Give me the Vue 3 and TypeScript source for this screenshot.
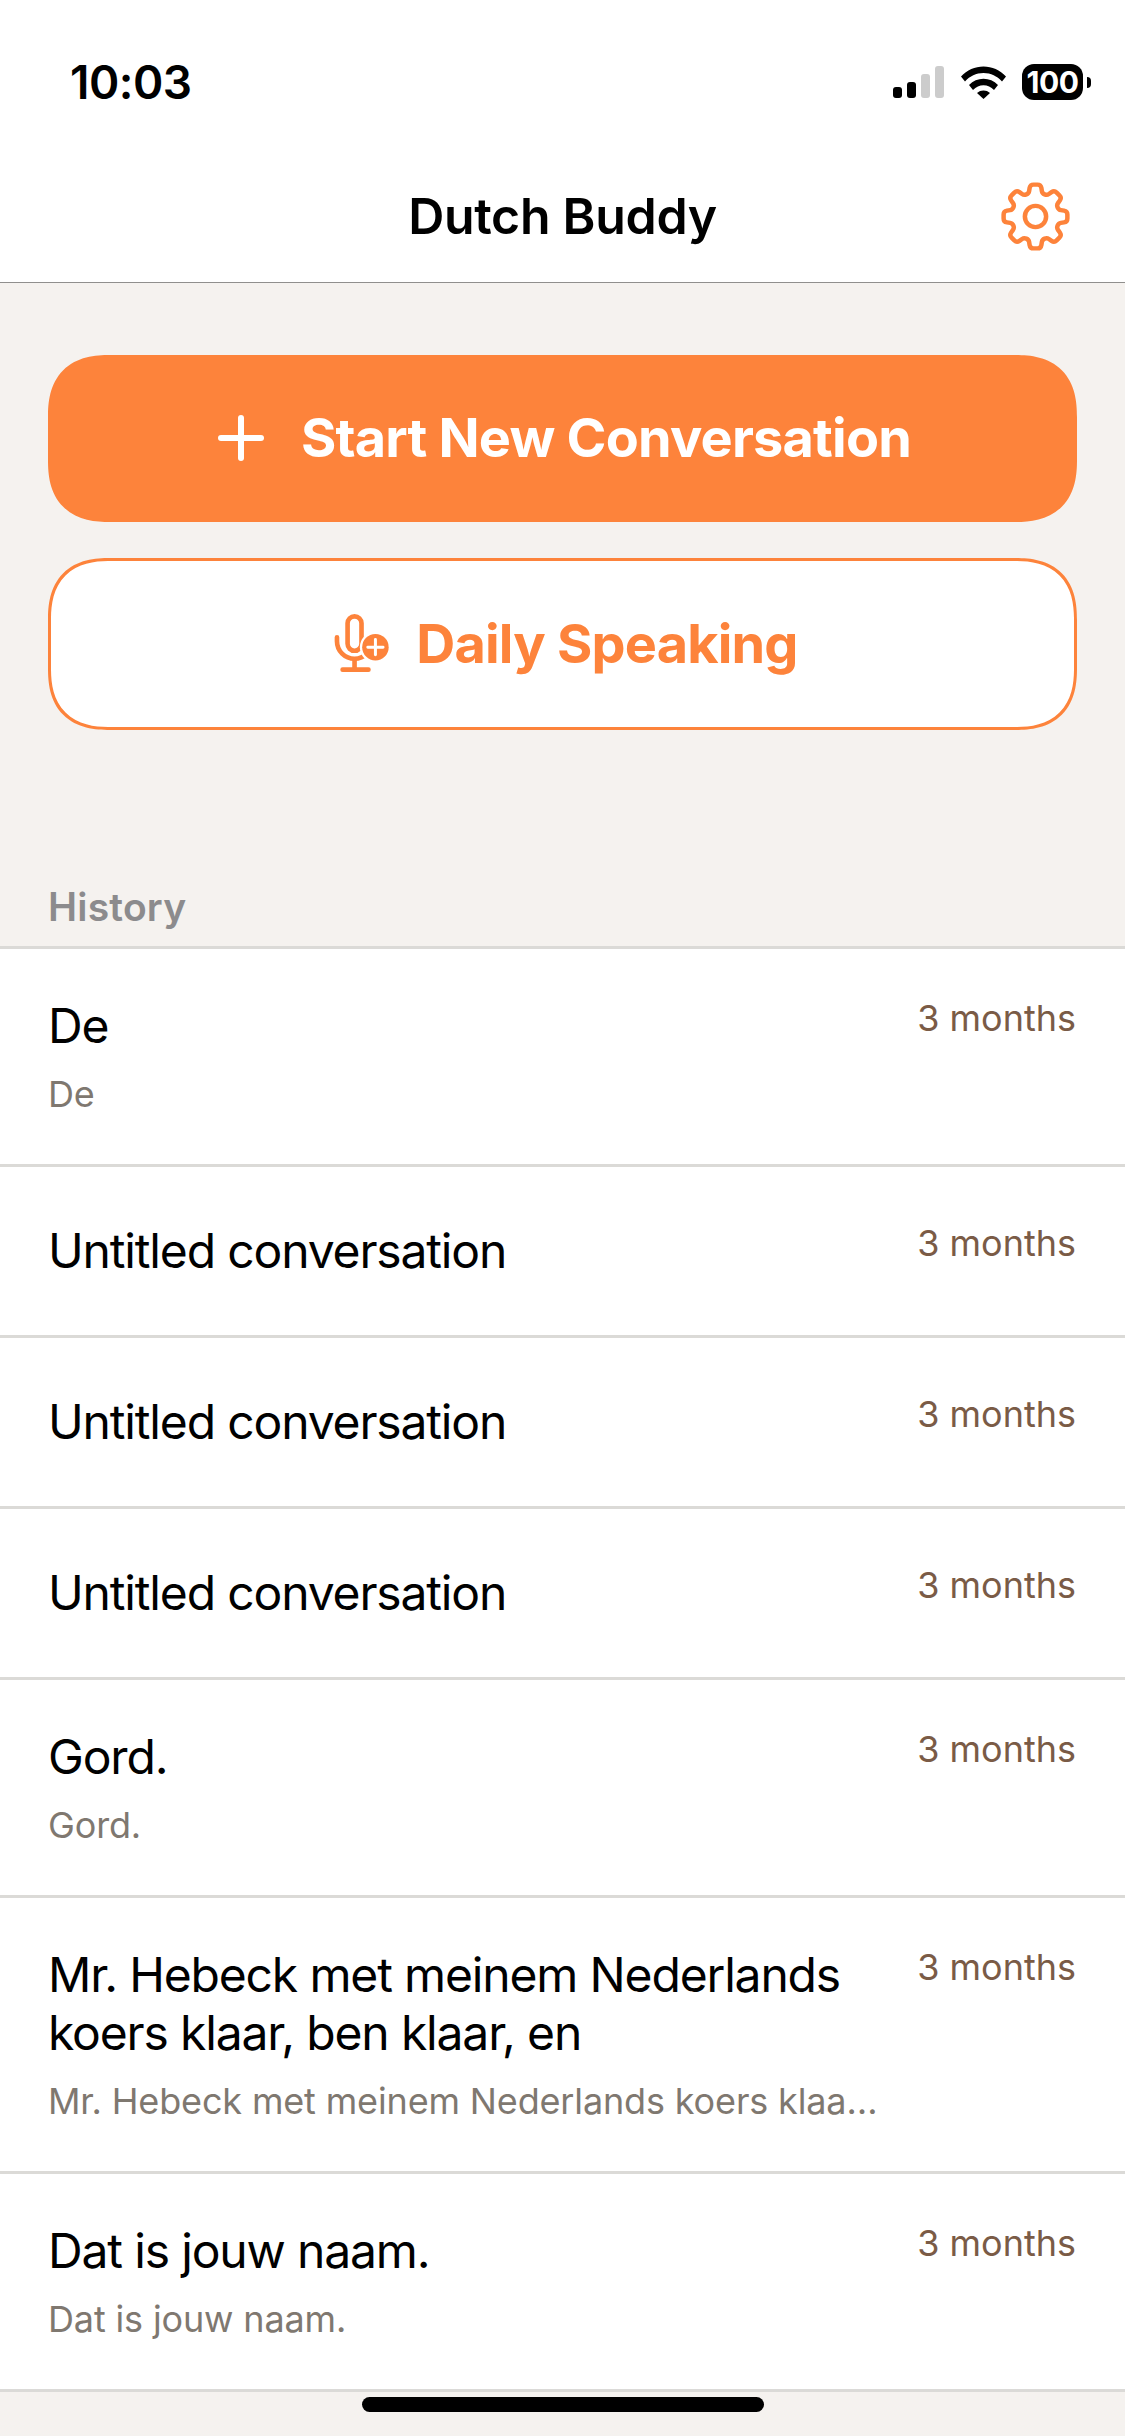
<script setup lang="ts">
interface Conversation {
  title: string
  preview?: string
  age: string
}

const conversations: Conversation[] = [
  { title: 'De', preview: 'De', age: '3 months' },
  { title: 'Untitled conversation', age: '3 months' },
  { title: 'Untitled conversation', age: '3 months' },
  { title: 'Untitled conversation', age: '3 months' },
  { title: 'Gord.', preview: 'Gord.', age: '3 months' },
  {
    title: 'Mr. Hebeck met meinem Nederlands koers klaar, ben klaar, en',
    preview: 'Mr. Hebeck met meinem Nederlands koers klaar, ben klaar, en',
    age: '3 months'
  },
  { title: 'Dat is jouw naam.', preview: 'Dat is jouw naam.', age: '3 months' }
]
</script>

<template>
  <div class="screen">
    <div class="status-bar">
      <span class="clock">10:03</span>
      <div class="status-icons">
        <svg class="signal" width="51" height="32" viewBox="0 0 51 32">
          <rect x="0" y="21" width="9" height="11" rx="3" fill="#000" />
          <rect x="14" y="16" width="9" height="16" rx="3" fill="#000" />
          <rect x="28" y="8" width="9" height="24" rx="3" fill="#ccc" />
          <rect x="42" y="0" width="9" height="32" rx="3" fill="#ccc" />
        </svg>
        <svg class="wifi" width="45" height="33" viewBox="0 0 45 33">
          <path d="M0 10.5C6 4 14 .5 22.500 .5S39 4 45 10.500l-4 5C36 10 30 7 22.500 7S9 10 4 15.500Z" fill="#000" />
          <path d="M8 19C12 15 17 12.800 22.500 12.800S33 15 37 19l-4 5c-3-3-6.500-4.700-10.500-4.700S15 21 12 24Z" fill="#000" />
          <path d="M16 27c2-1.700 4-2.500 6.500-2.500S27 25.300 29 27l-6.500 6Z" fill="#000" />
        </svg>
        <div class="battery">
          <span class="battery-level">100</span>
          <span class="battery-nub"></span>
        </div>
      </div>
    </div>

    <header class="nav-bar">
      <h1 class="nav-title">Dutch Buddy</h1>
      <svg class="gear" width="85" height="85" viewBox="0 0 24 24" fill="none" stroke="#fd833b" stroke-width="1.27" stroke-linejoin="round">
        <path d="M10.343 3.94c.09-.542.56-.94 1.11-.94h1.093c.55 0 1.02.398 1.11.94l.149.894c.07.424.384.764.78.93.398.164.855.142 1.205-.108l.737-.527a1.125 1.125 0 0 1 1.45.12l.773.774c.39.389.44 1.002.12 1.45l-.527.737c-.25.35-.272.806-.107 1.204.165.397.505.71.93.78l.893.15c.543.09.94.559.94 1.109v1.094c0 .55-.397 1.02-.94 1.11l-.894.149c-.424.07-.764.383-.929.78-.165.398-.143.854.107 1.204l.527.738c.32.447.269 1.06-.12 1.45l-.774.773a1.125 1.125 0 0 1-1.449.12l-.738-.527c-.35-.25-.806-.272-1.203-.107-.398.165-.71.505-.781.929l-.149.894c-.09.542-.56.94-1.11.94h-1.094c-.55 0-1.019-.398-1.11-.94l-.148-.894c-.071-.424-.384-.764-.781-.93-.398-.164-.854-.142-1.204.108l-.738.527c-.447.32-1.06.269-1.45-.12l-.773-.774a1.125 1.125 0 0 1-.12-1.45l.527-.737c.25-.35.272-.806.108-1.204-.165-.397-.506-.71-.93-.78l-.894-.15c-.542-.09-.94-.56-.94-1.110v-1.094c0-.55.398-1.02.94-1.11l.894-.149c.424-.07.765-.383.93-.78.165-.398.143-.854-.108-1.204l-.526-.738a1.125 1.125 0 0 1 .12-1.45l.773-.773a1.125 1.125 0 0 1 1.45-.12l.737.527c.35.25.807.272 1.204.107.397-.165.71-.505.78-.929l.15-.894Z" />
        <circle cx="12" cy="12" r="3" />
      </svg>
    </header>

    <main class="content">
      <section class="actions">
        <button type="button" class="action action-primary">
          <svg width="46" height="46" viewBox="0 0 46 46" stroke="#fff" stroke-width="6" stroke-linecap="round">
            <line x1="23" y1="3" x2="23" y2="43" />
            <line x1="3" y1="23" x2="43" y2="23" />
          </svg>
          <span>Start New Conversation</span>
        </button>
        <button type="button" class="action action-outline">
          <svg width="58" height="62" viewBox="100 70 175 185" fill="none" stroke="#fd833b" stroke-width="14" stroke-linecap="round">
            <rect x="144" y="82" width="42" height="104" rx="21" />
            <path d="M112 145v12a53 53 0 0 0 106 0" />
            <path d="M165 212v31M129 243h78" />
            <circle cx="228" cy="175" r="47" fill="#fff" stroke="none" />
            <circle cx="228" cy="175" r="40" fill="#fd833b" stroke="none" />
            <path d="M205 175h46M228 152v46" stroke="#fff" stroke-width="9" />
          </svg>
          <span>Daily Speaking</span>
        </button>
      </section>

      <h2 class="history-label">History</h2>

      <ul class="history">
        <li
          v-for="(item, index) in conversations"
          :key="index"
          class="row"
          :class="{ 'row-plain': !item.preview }"
        >
          <div class="row-text">
            <div class="row-title">{{ item.title }}</div>
            <div v-if="item.preview" class="row-preview">{{ item.preview }}</div>
          </div>
          <span class="row-age">{{ item.age }}</span>
        </li>
      </ul>
    </main>

    <div class="home-indicator"></div>
  </div>
</template>

<style>
html,
body {
  margin: 0;
  background: #f5f2ef;
}
</style>

<style scoped>
.screen {
  position: relative;
  width: 1125px;
  height: 2436px;
  overflow: hidden;
  background: #f5f2ef;
  color: #000;
  font-family: Inter, "Noto Sans", sans-serif;
}

.status-bar {
  display: flex;
  align-items: center;
  justify-content: space-between;
  box-sizing: border-box;
  height: 150px;
  padding: 14px 34px 0 70px;
  background: #fff;
}

.clock {
  font-size: 46px;
  font-weight: 600;
  letter-spacing: -0.5px;
}

.status-icons {
  display: flex;
  align-items: center;
}

.signal {
  margin-right: 17px;
}

.wifi {
  margin-right: 16px;
}

.battery {
  display: flex;
  align-items: center;
  gap: 4px;
}

.battery-level {
  display: flex;
  align-items: center;
  justify-content: center;
  width: 61px;
  height: 36px;
  border-radius: 12px;
  background: #000;
  color: #fff;
  font-size: 30px;
  font-weight: 700;
  letter-spacing: -0.5px;
}

.battery-nub {
  width: 4px;
  height: 11px;
  border-radius: 0 4px 4px 0;
  background: #000;
}

.nav-bar {
  position: relative;
  display: flex;
  align-items: center;
  justify-content: center;
  height: 132px;
  background: #fff;
  border-bottom: 1px solid #908f8d;
}

.nav-title {
  margin: 0;
  font-size: 50px;
  font-weight: 600;
  letter-spacing: -0.3px;
}

.gear {
  position: absolute;
  top: 24px;
  right: 47px;
}

.actions {
  display: flex;
  flex-direction: column;
  gap: 36px;
  padding: 72px 48px 0;
}

.action {
  display: flex;
  align-items: center;
  justify-content: center;
  width: 100%;
  box-sizing: border-box;
  padding: 0 0 2px;
  font-family: inherit;
  font-size: 54px;
  font-weight: 700;
  letter-spacing: -0.8px;
  border-radius: 62px;
  corner-shape: superellipse(1.3);
}

.action-primary {
  gap: 37px;
  height: 167px;
  padding-left: 4px;
  border: none;
  background: #fd833b;
  color: #fff;
}

.action-outline {
  gap: 25px;
  height: 172px;
  padding-left: 6px;
  border: 3px solid #fd833b;
  background: #fff;
  color: #fd833b;
}

.history-label {
  margin: 154px 0 0;
  padding: 0 48px;
  font-size: 39px;
  line-height: 45px;
  font-weight: 600;
  letter-spacing: 0.2px;
  color: #8c8b8d;
}

.history {
  margin: 17px 0 0;
  padding: 0;
  list-style: none;
  background: #fff;
  border-top: 3px solid #dbdad7;
}

.row {
  display: flex;
  align-items: flex-start;
  justify-content: space-between;
  padding: 48px 49px 48px 48px;
  background: #fff;
  border-bottom: 3px solid #dbdad7;
}

.row-plain {
  padding-top: 55.25px;
  padding-bottom: 55.25px;
}

.row-text {
  width: 836px;
  min-width: 0;
}

.row-title {
  font-size: 48px;
  line-height: 57.5px;
  letter-spacing: -1.15px;
}

.row-preview {
  margin-top: 18.5px;
  overflow: hidden;
  font-size: 36px;
  line-height: 43px;
  letter-spacing: -0.15px;
  color: #7f7870;
  white-space: nowrap;
  text-overflow: ellipsis;
}

.row-age {
  font-size: 36px;
  line-height: 43px;
  color: #7a5b46;
  white-space: nowrap;
}

.home-indicator {
  position: absolute;
  bottom: 24px;
  left: 362px;
  width: 402px;
  height: 15px;
  border-radius: 8px;
  background: #000;
}
</style>
